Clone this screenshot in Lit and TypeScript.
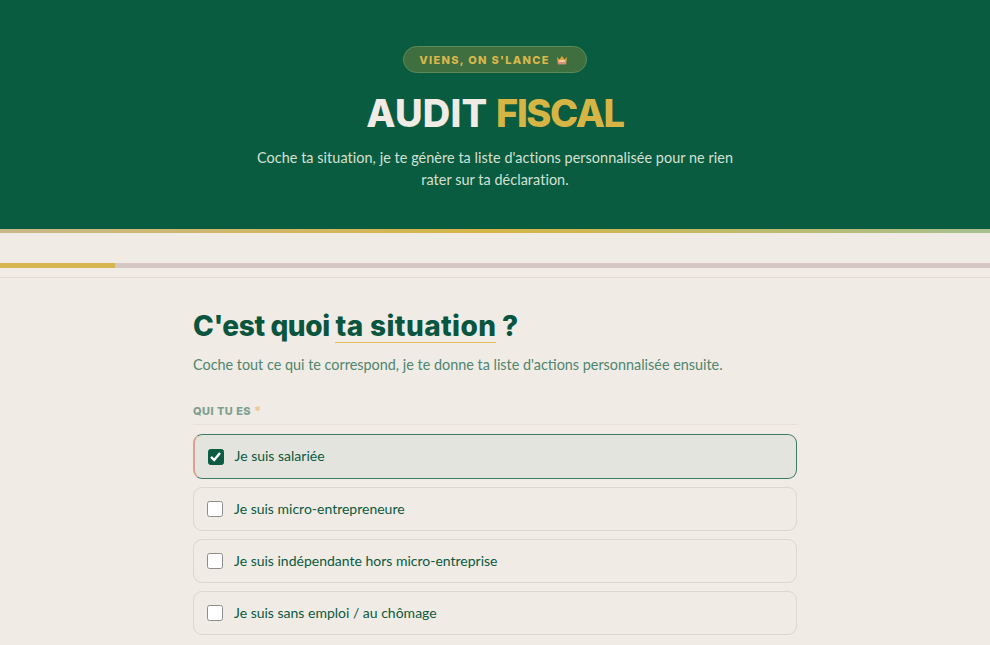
import { LitElement, html, css } from "lit";
import { customElement } from "lit/decorators.js";

const OPTIONS = [
  { label: "Je suis salariée", checked: true },
  { label: "Je suis micro-entrepreneure", checked: false },
  { label: "Je suis indépendante hors micro-entreprise", checked: false },
  { label: "Je suis sans emploi / au chômage", checked: false },
];

@customElement("app-root")
export class AppRoot extends LitElement {
  static styles = css`
    :host {
      display: block;
      height: 645px;
      overflow: hidden;
      background: #f0ebe4;
      font-family: "Lato", "Inter", sans-serif;
      color: #0b5c42;
    }
    .hero {
      background: #095c40;
      height: 229px;
      box-sizing: border-box;
      padding-top: 46px;
      display: flex;
      flex-direction: column;
      align-items: center;
    }
    .pill {
      box-sizing: border-box;
      height: 27px;
      width: 184px;
      padding-right: 3px;
      border-radius: 14px;
      background: #3f6f3e;
      border: 1px solid #5d8a58;
      color: #d9b84c;
      font-family: "Inter", sans-serif;
      font-size: 11px;
      font-weight: 800;
      letter-spacing: 1.3px;
      display: flex;
      align-items: center;
      justify-content: center;
      gap: 6px;
      white-space: nowrap;
    }
    .pill svg { width: 12px; height: 12px; flex: none; }
    h1 {
      margin: 20px 0 0;
      font-family: "Inter", sans-serif;
      font-size: 38px;
      line-height: 40px;
      font-weight: 800;
      letter-spacing: 0.2px;
      color: #f0ebe4;
    }
    h1 span { color: #d6b545; letter-spacing: -1.4px; }
    .lead {
      margin: 14px 0 0;
      width: 500px;
      text-align: center;
      font-size: 14.4px;
      line-height: 22px;
      color: #d5e0d3;
      letter-spacing: 0.06px;
    }
    .strip {
      height: 4px;
      background: linear-gradient(90deg, #c9b98a 0%, #d6b545 50%, #a8c090 100%);
    }
    .progress-zone {
      height: 45px;
      box-sizing: border-box;
      padding-top: 30px;
      border-bottom: 1px solid #e0dad2;
    }
    .track { height: 5px; background: #d4c6c0; }
    .fill { height: 5px; background: #d6b54f; }
    main {
      width: 604px;
      margin: 0 auto;
      padding: 31px 0 0;
    }
    h2 {
      margin: 0;
      font-family: "Inter", sans-serif;
      font-size: 28px;
      line-height: 34px;
      font-weight: 800;
      letter-spacing: -0.4px;
      color: #0a5540;
    }
    h2 span {
      display: inline-block;
      line-height: 31px;
      letter-spacing: 0.4px;
      border-bottom: 1.5px solid #e3bc5f;
    }
    .sub {
      margin: 12px 0 0;
      font-size: 14.4px;
      line-height: 20px;
      color: #4f8670;
    }
    .group {
      margin-top: 28px;
      padding-bottom: 5px;
      border-bottom: 1px solid #e6e0d8;
      font-family: "Inter", sans-serif;
      font-size: 11px;
      line-height: 16px;
      font-weight: 800;
      letter-spacing: 0.45px;
      color: #7f9f8f;
    }
    .group b { color: #ecc98c; font-weight: 700; font-size: 13px; line-height: 10px; vertical-align: -1px; }
    .list {
      display: flex;
      flex-direction: column;
      gap: 8px;
      margin-top: 9px;
    }
    .opt {
      box-sizing: border-box;
      height: 44px;
      display: flex;
      align-items: center;
      gap: 11px;
      padding-left: 13px;
      border: 1.5px solid #dcd7cf;
      border-radius: 9px;
      font-size: 14px;
      color: #0a5a3f;
    }
    .opt span { padding-bottom: 2px; }
    .opt.on {
      height: 45px;
      background: #e3e4de;
      border-color: #3f7a64;
      border-left: 2px solid #d9a090;
      padding-left: 12.5px;
    }
    .box {
      box-sizing: border-box;
      width: 16px;
      height: 16px;
      flex: none;
      background: #fff;
      border: 1.5px solid #8d8d8a;
      border-radius: 2.5px;
    }
    .box.on {
      background: #0b5c42;
      border-color: #0b5c42;
      display: flex;
      align-items: center;
      justify-content: center;
    }
    .box svg { width: 13px; height: 13px; }
  `;

  render() {
    return html`
      <section class="hero">
        <div class="pill">
          VIENS, ON S'LANCE
          <svg viewBox="0 0 12 12" aria-hidden="true">
            <path d="M1 3 3.500 5.600 6 2l2.500 3.600L11 3l-.8 7H1.800z" fill="#e0a33c" />
            <rect x="2" y="7.800" width="8" height="2.600" fill="#d98f7c" />
            <rect x="3" y="6.200" width="6" height="1.600" fill="#f1d9c4" />
          </svg>
        </div>
        <h1>AUDIT <span>FISCAL</span></h1>
        <p class="lead">Coche ta situation, je te génère ta liste d'actions personnalisée pour ne rien rater sur ta déclaration.</p>
      </section>
      <div class="strip"></div>
      <div class="progress-zone">
        <div class="track"><div class="fill" style="width: 115px"></div></div>
      </div>
      <main>
        <h2>C'est quoi <span>ta situation</span> ?</h2>
        <p class="sub">Coche tout ce qui te correspond, je te donne ta liste d'actions personnalisée ensuite.</p>
        <div class="group">QUI TU ES <b>*</b></div>
        <div class="list">
          ${OPTIONS.map(
            (o) => html`
              <div class="opt ${o.checked ? "on" : ""}">
                <div class="box ${o.checked ? "on" : ""}">
                  ${o.checked
                    ? html`<svg viewBox="0 0 13 13" aria-hidden="true"><path d="M2 6.800 5.200 10 11 3" fill="none" stroke="#fff" stroke-width="2.400" /></svg>`
                    : ""}
                </div>
                <span>${o.label}</span>
              </div>
            `
          )}
        </div>
      </main>
    `;
  }
}
